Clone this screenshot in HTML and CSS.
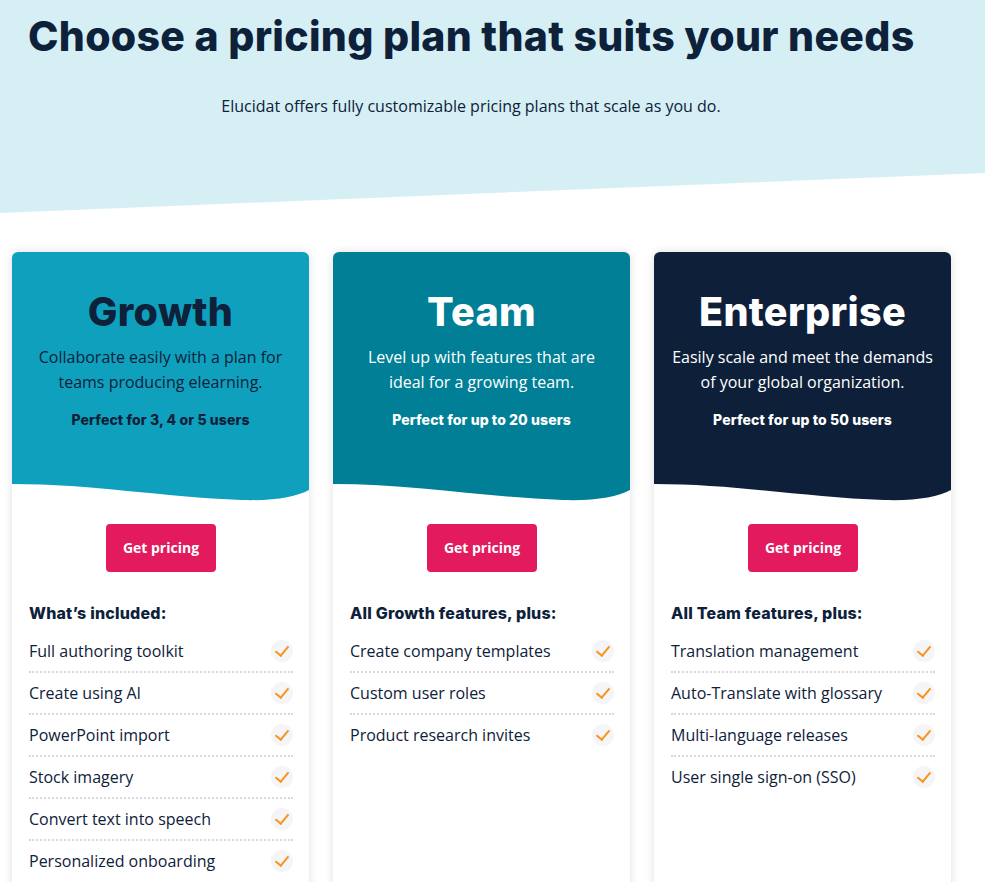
FILE: index.html
```html
<!DOCTYPE html>
<html lang="en">
<head>
  <meta charset="UTF-8">
  <title>Pricing plans</title>
  <link rel="stylesheet" href="styles.css">
</head>
<body>
  <!-- Hero -->
  <div class="hero">
    <div class="hero-inner">
      <h1>Choose a pricing plan that suits your needs</h1>
      <p class="hero-sub">Elucidat offers fully customizable pricing plans that scale as you do.</p>
    </div>
  </div>

  <!-- Plans -->
  <div class="plans">
    <div class="plan plan-growth">
      <div class="plan-head">
        <h2>Growth</h2>
        <p class="plan-desc">Collaborate easily with a plan for teams producing elearning.</p>
        <p class="plan-users">Perfect for 3, 4 or 5 users</p>
      </div>
      <svg class="wave" viewBox="0 0 297 18" preserveAspectRatio="none"><path d="M0,0 C80,0 150,13 230,16 C262,17 284,13 297,6 V0 Z"/></svg>
      <div class="plan-body">
        <a class="btn" href="#">Get pricing</a>
        <h3>What’s included:</h3>
        <ul class="features">
          <li>Full authoring toolkit<span class="check"></span></li>
          <li>Create using AI<span class="check"></span></li>
          <li>PowerPoint import<span class="check"></span></li>
          <li>Stock imagery<span class="check"></span></li>
          <li>Convert text into speech<span class="check"></span></li>
          <li>Personalized onboarding<span class="check"></span></li>
        </ul>
      </div>
    </div>

    <div class="plan plan-team">
      <div class="plan-head">
        <h2>Team</h2>
        <p class="plan-desc">Level up with features that are ideal for a growing team.</p>
        <p class="plan-users">Perfect for up to 20 users</p>
      </div>
      <svg class="wave" viewBox="0 0 297 18" preserveAspectRatio="none"><path d="M0,0 C80,0 150,13 230,16 C262,17 284,13 297,6 V0 Z"/></svg>
      <div class="plan-body">
        <a class="btn" href="#">Get pricing</a>
        <h3>All Growth features, plus:</h3>
        <ul class="features">
          <li>Create company templates<span class="check"></span></li>
          <li>Custom user roles<span class="check"></span></li>
          <li>Product research invites<span class="check"></span></li>
        </ul>
      </div>
    </div>

    <div class="plan plan-enterprise">
      <div class="plan-head">
        <h2>Enterprise</h2>
        <p class="plan-desc">Easily scale and meet the demands of your global organization.</p>
        <p class="plan-users">Perfect for up to 50 users</p>
      </div>
      <svg class="wave" viewBox="0 0 297 18" preserveAspectRatio="none"><path d="M0,0 C80,0 150,13 230,16 C262,17 284,13 297,6 V0 Z"/></svg>
      <div class="plan-body">
        <a class="btn" href="#">Get pricing</a>
        <h3>All Team features, plus:</h3>
        <ul class="features">
          <li>Translation management<span class="check"></span></li>
          <li>Auto-Translate with glossary<span class="check"></span></li>
          <li>Multi-language releases<span class="check"></span></li>
          <li>User single sign-on (SSO)<span class="check"></span></li>
        </ul>
      </div>
    </div>
  </div>
</body>
</html>
```

FILE: styles.css
```css
:root {
  --navy: #0e213a;
  --hero-bg: #d6eff4;
  --growth: #0fa0bd;
  --team: #007f96;
  --enterprise: #0e2039;
  --pink: #e31b5e;
  --orange: #f7941d;

  --font-head: Inter, "Liberation Sans", sans-serif;
  --font-body: "Open Sans", sans-serif;
}

body {
  margin: 0;
  background: #fff;
  font-family: var(--font-body);
  color: var(--navy);
}

/* Hero with slanted bottom edge */
.hero {
  background: var(--hero-bg);
  height: 213px;
  clip-path: polygon(0 0, 100% 0, 100% 173px, 0 213px);
}
.hero-inner {
  width: 886px;
  margin-left: 28px;
  padding-top: 12px;
}
.hero h1 {
  margin: 0;
  font-family: var(--font-head);
  font-weight: 800;
  font-size: 41px;
  line-height: 48px;
  letter-spacing: 0.3px;
  white-space: nowrap;
}
.hero-sub {
  margin: 34px 0 0;
  text-align: center;
  font-size: 16px;
  line-height: 24px;
}

/* Plan cards */
.plans {
  display: flex;
  gap: 24px;
  margin: 39px 0 0 12px;
  padding-bottom: 40px;
}
.plan {
  width: 297px;
  background: #fff;
  border-radius: 6px;
  box-shadow: 0 0 10px rgba(0,0,0,0.13);
  overflow: hidden;
  display: flex;
  flex-direction: column;
}
.plan-head {
  height: 232px;
  box-sizing: border-box;
  padding: 37px 16px 0;
  text-align: center;
  color: #fff;
}
.plan h2 {
  margin: 0;
  font-family: var(--font-head);
  font-weight: 800;
  font-size: 39.5px;
  line-height: 46px;
  letter-spacing: 0.3px;
}
.plan-desc {
  margin: 10px 0 0;
  font-size: 16px;
  line-height: 25px;
}
.plan-users {
  margin: 15px 0 0;
  font-family: var(--font-head);
  font-weight: 800;
  font-size: 14px;
  line-height: 20px;
  letter-spacing: 0.1px;
}
.wave {
  display: block;
  width: 100%;
  height: 18px;
}

.plan-growth .plan-head { background: var(--growth); color: var(--navy); }
.plan-growth .wave path { fill: var(--growth); }
.plan-team .plan-head { background: var(--team); }
.plan-team .wave path { fill: var(--team); }
.plan-enterprise .plan-head { background: var(--enterprise); }
.plan-enterprise .wave path { fill: var(--enterprise); }

.plan-body {
  padding: 22px 16px 60px 17px;
  display: flex;
  flex-direction: column;
}
.btn {
  align-self: center;
  display: inline-block;
  width: 110px;
  height: 48px;
  line-height: 48px;
  text-align: center;
  background: var(--pink);
  color: #fff;
  border-radius: 4px;
  font-weight: 700;
  font-size: 14px;
  text-decoration: none;
}
.plan h3 {
  margin: 31px 0 0;
  font-family: var(--font-head);
  font-weight: 800;
  font-size: 16px;
  line-height: 20px;
  letter-spacing: 0.2px;
}

.features {
  list-style: none;
  margin: 8px 0 0;
  padding: 0;
}
.features li {
  display: flex;
  align-items: center;
  justify-content: space-between;
  height: 40px;
  font-size: 16px;
  border-bottom: 2px dotted #d8d8dc;
}
.features li:last-child {
  border-bottom: none;
}
.check {
  width: 22px;
  height: 22px;
  border-radius: 50%;
  background: #f5f5f8;
  position: relative;
  flex: none;
}
.check::after {
  content: "";
  position: absolute;
  left: 7px;
  top: 3px;
  width: 6px;
  height: 11px;
  border-right: 2px solid var(--orange);
  border-bottom: 2px solid var(--orange);
  transform: rotate(40deg);
}
```
